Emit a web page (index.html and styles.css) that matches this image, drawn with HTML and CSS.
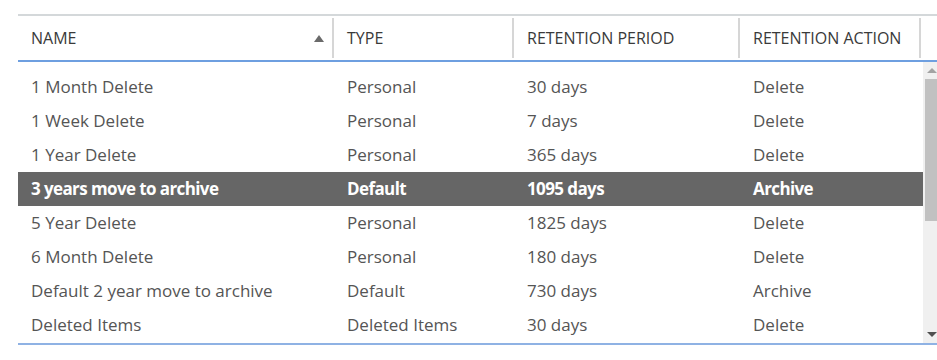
FILE: index.html
```html
<!DOCTYPE html>
<html lang="en">
<head>
<meta charset="utf-8">
<title>Retention tags</title>
<link rel="stylesheet" href="styles.css">
</head>
<body>
<div class="list">
  <div class="head">
    <div class="hcell c1"><span>NAME</span><span class="sort"></span></div>
    <div class="hcell c2">TYPE</div>
    <div class="hcell c3">RETENTION PERIOD</div>
    <div class="hcell c4">RETENTION ACTION</div>
    <div class="hcell c5"></div>
  </div>
  <div class="body">
    <div class="rows">
      <div class="row"><div class="c1">1 Month Delete</div><div class="c2">Personal</div><div class="c3">30 days</div><div class="c4">Delete</div></div>
      <div class="row"><div class="c1">1 Week Delete</div><div class="c2">Personal</div><div class="c3">7 days</div><div class="c4">Delete</div></div>
      <div class="row"><div class="c1">1 Year Delete</div><div class="c2">Personal</div><div class="c3">365 days</div><div class="c4">Delete</div></div>
      <div class="row selected"><div class="c1">3 years move to archive</div><div class="c2">Default</div><div class="c3">1095 days</div><div class="c4">Archive</div></div>
      <div class="row"><div class="c1">5 Year Delete</div><div class="c2">Personal</div><div class="c3">1825 days</div><div class="c4">Delete</div></div>
      <div class="row"><div class="c1">6 Month Delete</div><div class="c2">Personal</div><div class="c3">180 days</div><div class="c4">Delete</div></div>
      <div class="row"><div class="c1">Default 2 year move to archive</div><div class="c2">Default</div><div class="c3">730 days</div><div class="c4">Archive</div></div>
      <div class="row"><div class="c1">Deleted Items</div><div class="c2">Deleted Items</div><div class="c3">30 days</div><div class="c4">Delete</div></div>
    </div>
    <div class="scrollbar">
      <div class="arrow up"></div>
      <div class="thumb"></div>
      <div class="track"></div>
      <div class="arrow down"></div>
    </div>
  </div>
</div>
</body>
</html>
```
FILE: styles.css
```css
html, body {
  margin: 0;
  padding: 0;
  background: #ffffff;
  overflow: hidden;
}
body {
  padding: 14px 0 0 18px;
  font-family: "Open Sans", "Noto Sans", sans-serif;
  color: #555555;
}
.list {
  width: 940px;
}
.head {
  display: flex;
  height: 44px;
  border-top: 2px solid #d4d8da;
  border-bottom: 2px solid #6e9fe0;
}
.hcell {
  display: flex;
  align-items: center;
  box-sizing: border-box;
  padding-left: 13px;
  font-size: 16px;
  color: #3a3a3a;
  border-right: 2px solid #d6d6d6;
  margin: 2px 0;
}
.hcell.c5 {
  border-right: none;
}
.c1 { width: 316px; }
.c2 { width: 180px; }
.c3 { width: 226px; }
.c4 { width: 181px; }
.c5 { flex: 1; }
.head .c1 {
  justify-content: space-between;
  padding-right: 8px;
}
.sort {
  width: 0;
  height: 0;
  border-left: 5px solid transparent;
  border-right: 5px solid transparent;
  border-bottom: 7px solid #6a6a6a;
}
.body {
  display: flex;
  height: 281px;
  border-bottom: 2px solid #8fb2e4;
}
.rows {
  width: 905px;
  padding-top: 8px;
  box-sizing: border-box;
}
.row {
  display: flex;
  height: 34px;
  align-items: center;
  font-size: 17px;
  color: #555555;
}
.row > div {
  box-sizing: border-box;
  padding-left: 13px;
  padding-bottom: 2px;
  white-space: nowrap;
}
.row.selected {
  background: #666666;
  color: #ffffff;
  font-weight: 700;
  letter-spacing: -0.6px;
}
.scrollbar {
  width: 17px;
  display: flex;
  flex-direction: column;
  background: #f0f0f0;
}
.arrow {
  height: 17px;
  display: flex;
  align-items: center;
  justify-content: center;
}
.arrow.up::before {
  content: "";
  border-left: 5px solid transparent;
  border-right: 5px solid transparent;
  border-bottom: 5px solid #a3a3a3;
}
.arrow.down::before {
  content: "";
  border-left: 5px solid transparent;
  border-right: 5px solid transparent;
  border-top: 5px solid #505050;
}
.thumb {
  height: 142px;
  margin: 0 2px;
  background: #c1c1c1;
}
.track {
  flex: 1;
}
```
